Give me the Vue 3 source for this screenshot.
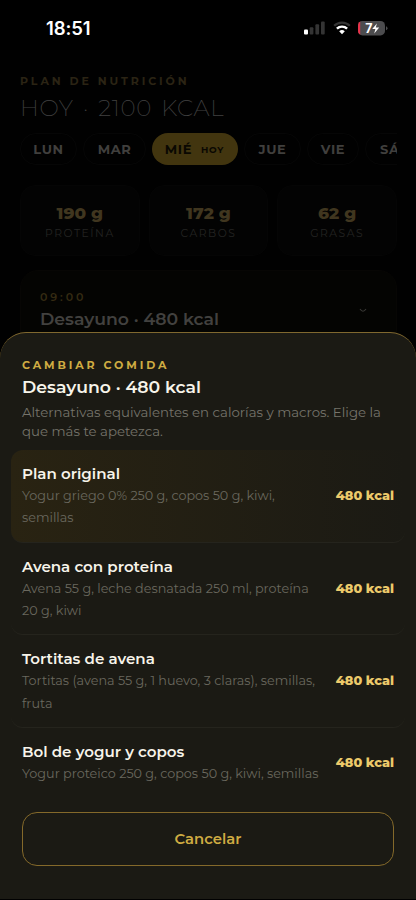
<script setup>
const days = [
  { name: 'LUN', cls: 'lun' },
  { name: 'MAR', cls: 'mar' },
  { name: 'MIÉ', cls: 'mie', today: true },
  { name: 'JUE', cls: 'jue' },
  { name: 'VIE', cls: 'vie' },
  { name: 'SÁB', cls: 'sab' },
]
const macros = [
  { value: '190 g', label: 'PROTEÍNA' },
  { value: '172 g', label: 'CARBOS' },
  { value: '62 g', label: 'GRASAS' },
]
const meals = [
  { name: 'Plan original', lines: ['Yogur griego 0% 250 g, copos 50 g, kiwi,', 'semillas'], active: true },
  { name: 'Avena con proteína', lines: ['Avena 55 g, leche desnatada 250 ml, proteína', '20 g, kiwi'] },
  { name: 'Tortitas de avena', lines: ['Tortitas (avena 55 g, 1 huevo, 3 claras), semillas,', 'fruta'] },
  { name: 'Bol de yogur y copos', lines: ['Yogur proteico 250 g, copos 50 g, kiwi, semillas'] },
]
</script>

<template>
  <div class="screen">
    <header class="status">
      <span class="clock">18:51</span>
      <div class="indicators">
        <svg class="signal" width="21" height="14" viewBox="0 0 21 14">
          <rect x="0" y="8.6" width="4" height="5" rx="1" fill="#fff" />
          <rect x="5.7" y="6.2" width="3.7" height="7.4" rx="1" fill="#343434" />
          <rect x="11.4" y="3.2" width="3.7" height="10.4" rx="1" fill="#343434" />
          <rect x="17" y="0.4" width="3.7" height="13.2" rx="1" fill="#343434" />
        </svg>
        <svg class="wifi" width="18" height="14" viewBox="0 0 18 14">
          <path d="M1.2 4.8a11 11 0 0 1 15.6 0" fill="none" stroke="#343434" stroke-width="2.3" />
          <path d="M3.9 7.7a7.2 7.2 0 0 1 10.2 0" fill="none" stroke="#fff" stroke-width="2.4" />
          <path d="M9 13.2 6.2 10.3a4 4 0 0 1 5.6 0z" fill="#fff" />
        </svg>
        <svg class="battery" width="30" height="15" viewBox="0 0 30 15">
          <defs><clipPath id="cell"><rect width="27" height="14.4" rx="4.5" /></clipPath></defs>
          <rect width="27" height="14.4" rx="4.5" fill="#4c4c4e" />
          <rect width="2.2" height="14.4" fill="#e8324a" clip-path="url(#cell)" />
          <path d="M28 5.2q1.5.5 1.5 2t-1.5 2z" fill="#4c4c4e" />
          <text x="7.2" y="11.7" class="charge">7</text>
          <path d="M18.9 2.4 14.2 8h3.2l-1.2 4.6L21.2 6.6h-3.4z" fill="#fff" />
        </svg>
      </div>
    </header>

    <main class="plan">
      <p class="eyebrow">PLAN DE NUTRICIÓN</p>
      <h1>HOY · 2100 KCAL</h1>
      <nav class="days">
        <span v-for="d in days" :key="d.name" class="day" :class="[d.cls, { on: d.today }]">
          {{ d.name }}<small v-if="d.today">HOY</small>
        </span>
      </nav>
      <section class="macros">
        <div v-for="m in macros" :key="m.label" class="macro">
          <b>{{ m.value }}</b>
          <span>{{ m.label }}</span>
        </div>
      </section>
      <section class="meal">
        <div>
          <p class="time">09:00</p>
          <h2>Desayuno · 480 kcal</h2>
        </div>
        <svg width="8" height="5" viewBox="0 0 8 5"><path d="M1 1q3 4.5 6 0" fill="none" stroke="#3a3936" stroke-width="1.1" /></svg>
      </section>
    </main>

    <section class="sheet">
      <p class="sheet-eyebrow">CAMBIAR COMIDA</p>
      <h2 class="sheet-title">Desayuno · 480 kcal</h2>
      <p class="intro">Alternativas equivalentes en calorías y macros. Elige la<br />que más te apetezca.</p>
      <ul>
        <li v-for="(m, i) in meals" :key="m.name" :class="['m' + i, { active: m.active }]">
          <div class="info">
            <h3>{{ m.name }}</h3>
            <p v-for="l in m.lines" :key="l">{{ l }}</p>
          </div>
          <span class="kcal">480 kcal</span>
        </li>
      </ul>
      <button>Cancelar</button>
    </section>
  </div>
</template>

<style>
body { background: #000; }
</style>

<style scoped>
* { box-sizing: border-box; margin: 0; padding: 0; }
.screen {
  position: relative; width: 416px; height: 900px; overflow: hidden; background: #010101;
  font-family: Montserrat, Inter, "Noto Sans", sans-serif; white-space: nowrap;
}
.status { height: 50px; background: #000; display: flex; justify-content: space-between; align-items: flex-start; padding: 20px 28px 0 46px; }
.clock { font: 600 18.5px/17px Inter, sans-serif; color: #fff; letter-spacing: -0.1px; }
.indicators { display: flex; align-items: center; padding-top: 0.5px; }
.wifi { margin-left: 8px; }
.battery { margin-left: 7px; }
.charge { font: 700 12.5px Inter, sans-serif; fill: #fff; }

.plan { padding: 24px 19px 0 20px; }
.eyebrow { font-size: 11px; line-height: 14px; font-weight: 700; letter-spacing: 2.9px; color: #2b2414; }
h1 { margin-top: 5px; font-weight: 200; font-size: 23px; line-height: 30px; letter-spacing: 0.7px; word-spacing: 2.8px; color: #414141; }
.days { display: flex; margin-top: 10px; height: 32px; gap: 6px; overflow: hidden; }
.day { flex: none; display: flex; align-items: center; justify-content: center; border: 1px solid #060606; border-radius: 16px; font-size: 13px; font-weight: 700; letter-spacing: 0.6px; color: #403f3d; }
.lun { width: 57px; } .mar { width: 63px; } .jue { width: 57px; } .vie { width: 52px; } .sab { width: 60px; }
.day.on { width: 86px; border: 0; background: #42350f; color: #0a0802; padding-right: 1px; }
.day small { font-size: 9px; margin-left: 9px; letter-spacing: 0.8px; }
.macros { display: grid; grid-template-columns: repeat(3, 1fr); gap: 9px; margin-top: 20px; }
.macro { height: 71px; border: 1px solid #050505; border-radius: 15px; background: #030303; display: flex; flex-direction: column; align-items: center; padding-top: 16px; }
.macro b { font-size: 17px; line-height: 23px; font-weight: 800; color: #40361f; }
.macro span { margin-top: 1px; font-size: 10.8px; line-height: 16px; letter-spacing: 1.5px; color: #242422; }
.meal { margin-top: 14px; height: 120px; border: 1px solid #070604; border-radius: 18px; background: #040402; padding: 19px 29px 0 19px; display: flex; justify-content: space-between; }
.meal svg { margin-top: 18px; }
.time { font-size: 11px; line-height: 14px; font-weight: 600; letter-spacing: 2.9px; color: #352b12; }
.meal h2 { margin-top: 4px; font-size: 17.3px; line-height: 22px; font-weight: 600; color: #42413f; }

.sheet {
  position: absolute; left: 0; right: 0; top: 332px; bottom: 1px; padding: 25px 22px 0;
  border-top: 1px solid #80682f; border-radius: 26px 26px 0 0; background: #1b1a14;
}
.sheet-eyebrow { font-size: 11px; line-height: 14px; font-weight: 700; letter-spacing: 2.9px; color: #cfac42; }
.sheet-title { margin-top: 4px; font-size: 17.3px; line-height: 22px; font-weight: 600; color: #f7f4ea; }
.intro { margin-top: 5px; font-size: 13.3px; line-height: 18.5px; color: #76746b; }
ul { list-style: none; margin: 10px -11px 0; }
li { height: 92.7px; padding: 13px 11px 0; border-bottom: 1px solid #25241d; border-radius: 12px; display: flex; justify-content: space-between; }
li.active { background: linear-gradient(90deg, #292312, #1b1a14); }
li.m3 { height: 84px; border: 0; }
h3 { font-size: 15.1px; line-height: 22px; font-weight: 600; color: #f7f4ea; }
.info p { font-size: 12.75px; line-height: 22.4px; color: #6a685e; }
.kcal { font-size: 12.8px; line-height: 65.5px; font-weight: 800; color: #ecca6b; }
li.m3 .kcal { line-height: 43.5px; }
button {
  display: block; width: 100%; height: 54px; border: 1px solid #84692a; border-radius: 15px;
  background: transparent; font: 600 14.8px/20px Montserrat, Inter, sans-serif; color: #cfac42;
}
</style>
